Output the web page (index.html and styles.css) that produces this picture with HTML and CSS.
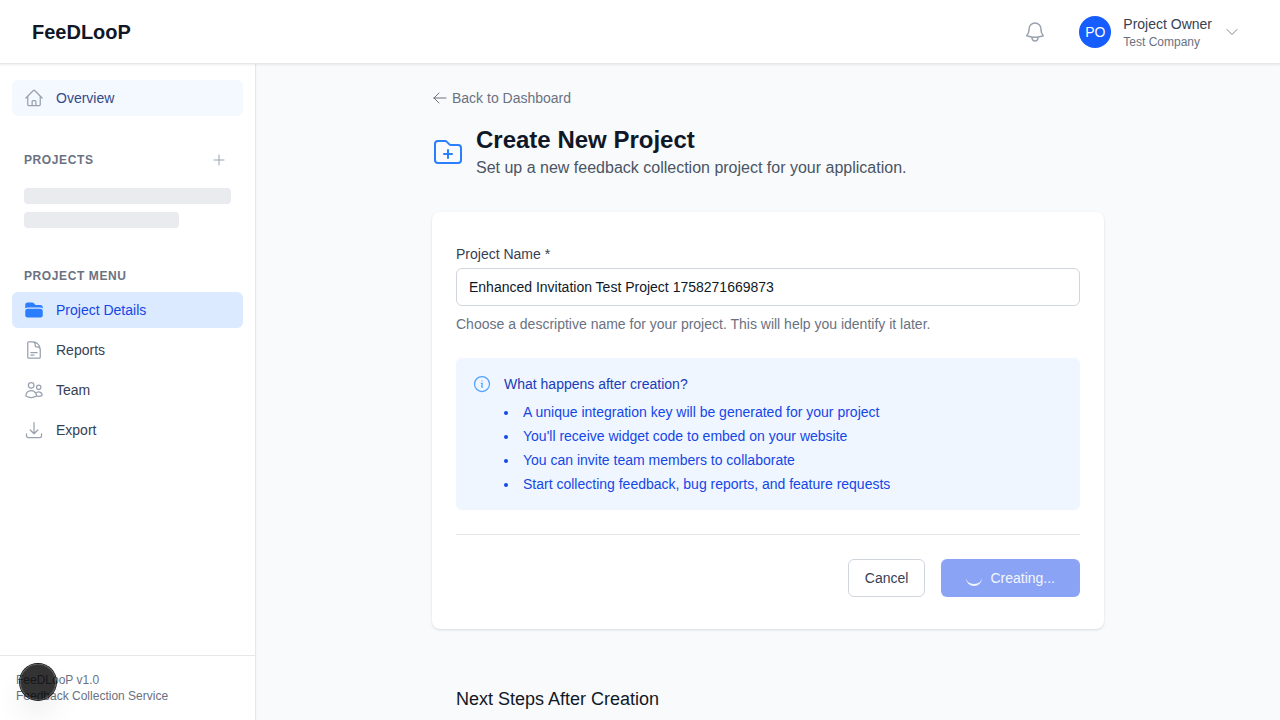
FILE: index.html
```html
<!DOCTYPE html>
<html lang="en">
<head>
<meta charset="utf-8">
<title>FeeDLooP</title>
<link rel="stylesheet" href="styles.css">
</head>
<body>
<header class="header">
  <div class="brand">FeeDLooP</div>
  <div class="header-right">
    <svg class="icon bell" viewBox="0 0 24 24"><path d="M14.857 17.082a23.848 23.848 0 0 0 5.454-1.31A8.967 8.967 0 0 1 18 9.75V9A6 6 0 0 0 6 9v.75a8.967 8.967 0 0 1-2.312 6.022c1.733.64 3.56 1.085 5.455 1.31m5.714 0a24.255 24.255 0 0 1-5.714 0m5.714 0a3 3 0 1 1-5.714 0"/></svg>
    <div class="user">
      <div class="avatar">PO</div>
      <div class="user-text"><div class="user-name">Project Owner</div><div class="user-company">Test Company</div></div>
      <svg class="icon chevron" viewBox="0 0 24 24"><path d="m19.5 8.25-7.5 7.5-7.5-7.5"/></svg>
    </div>
  </div>
</header>
<div class="body">
  <aside class="sidebar">
    <nav class="nav">
      <a class="nav-item overview"><svg class="icon" viewBox="0 0 24 24"><path d="m2.25 12 8.954-8.955c.44-.439 1.152-.439 1.591 0L21.75 12M4.5 9.75v10.125c0 .621.504 1.125 1.125 1.125H9.75v-4.875c0-.621.504-1.125 1.125-1.125h2.25c.621 0 1.125.504 1.125 1.125V21h4.125c.621 0 1.125-.504 1.125-1.125V9.75M8.25 21h8.25"/></svg>Overview</a>
      <div class="section-head projects-head"><span>PROJECTS</span><svg class="icon plus" viewBox="0 0 24 24"><path d="M12 4.5v15m7.5-7.5h-15"/></svg></div>
      <div class="skeletons"><div class="skeleton"></div><div class="skeleton short"></div></div>
      <div class="section-head menu-head"><span>PROJECT MENU</span></div>
      <div class="menu">
        <a class="nav-item active"><svg class="icon-solid" viewBox="0 0 24 24"><path d="M19.5 21a3 3 0 0 0 3-3v-4.5a3 3 0 0 0-3-3h-15a3 3 0 0 0-3 3V18a3 3 0 0 0 3 3h15ZM1.5 10.146V6a3 3 0 0 1 3-3h5.379a2.25 2.25 0 0 1 1.59.659l2.122 2.121c.14.141.331.22.53.22H19.5a3 3 0 0 1 3 3v1.146A4.483 4.483 0 0 0 19.5 9h-15a4.483 4.483 0 0 0-3 1.146Z"/></svg>Project Details</a>
        <a class="nav-item"><svg class="icon" viewBox="0 0 24 24"><path d="M19.5 14.25v-2.625a3.375 3.375 0 0 0-3.375-3.375h-1.5A1.125 1.125 0 0 1 13.5 7.125v-1.5a3.375 3.375 0 0 0-3.375-3.375H8.25m0 12.75h7.5m-7.5 3H12M10.5 2.25H5.625c-.621 0-1.125.504-1.125 1.125v17.25c0 .621.504 1.125 1.125 1.125h12.75c.621 0 1.125-.504 1.125-1.125V11.25a9 9 0 0 0-9-9Z"/></svg>Reports</a>
        <a class="nav-item"><svg class="icon" viewBox="0 0 24 24"><path d="M15 19.128a9.38 9.38 0 0 0 2.625.372 9.337 9.337 0 0 0 4.121-.952 4.125 4.125 0 0 0-7.533-2.493M15 19.128v-.003c0-1.113-.285-2.16-.786-3.07M15 19.128v.106A12.318 12.318 0 0 1 8.624 21c-2.331 0-4.512-.645-6.374-1.766l-.001-.109a6.375 6.375 0 0 1 11.964-3.07M12 6.375a3.375 3.375 0 1 1-6.75 0 3.375 3.375 0 0 1 6.75 0Zm8.25 2.25a2.625 2.625 0 1 1-5.25 0 2.625 2.625 0 0 1 5.25 0Z"/></svg>Team</a>
        <a class="nav-item"><svg class="icon" viewBox="0 0 24 24"><path d="M3 16.5v2.25A2.25 2.25 0 0 0 5.25 21h13.5A2.25 2.25 0 0 0 21 18.75V16.5M16.5 12 12 16.5m0 0L7.5 12m4.5 4.5V3"/></svg>Export</a>
      </div>
    </nav>
    <footer class="side-footer"><div>FeeDLooP v1.0</div><div>Feedback Collection Service</div></footer>
  </aside>
  <main class="main">
    <div class="content">
      <a class="back"><svg class="icon" viewBox="0 0 24 24"><path d="M10.5 19.5 3 12m0 0 7.5-7.5M3 12h18"/></svg>Back to Dashboard</a>
      <div class="title-row">
        <svg class="icon folder-plus" viewBox="0 0 24 24"><path d="M12 10.5v6m3-3H9m4.06-7.19-2.12-2.12a1.5 1.5 0 0 0-1.061-.44H4.5A2.25 2.25 0 0 0 2.25 6v12a2.25 2.25 0 0 0 2.25 2.25h15A2.25 2.25 0 0 0 21.75 18V9a2.25 2.25 0 0 0-2.25-2.25h-5.379a1.5 1.5 0 0 1-1.06-.44Z"/></svg>
        <div><h1>Create New Project</h1><p>Set up a new feedback collection project for your application.</p></div>
      </div>
      <section class="card">
        <label class="label" for="name">Project Name *</label>
        <input class="input" id="name" type="text" value="Enhanced Invitation Test Project 1758271669873">
        <p class="hint">Choose a descriptive name for your project. This will help you identify it later.</p>
        <div class="info">
          <svg class="icon" viewBox="0 0 24 24"><path d="m11.25 11.25.041-.02a.75.75 0 0 1 1.063.852l-.708 2.836a.75.75 0 0 0 1.063.853l.041-.021M21 12a9 9 0 1 1-18 0 9 9 0 0 1 18 0Zm-9-3.75h.008v.008H12V8.25Z"/></svg>
          <div>
            <h3>What happens after creation?</h3>
            <ul>
              <li>A unique integration key will be generated for your project</li>
              <li>You'll receive widget code to embed on your website</li>
              <li>You can invite team members to collaborate</li>
              <li>Start collecting feedback, bug reports, and feature requests</li>
            </ul>
          </div>
        </div>
        <div class="actions">
          <button class="btn cancel">Cancel</button>
          <button class="btn create"><span class="spinner"></span>Creating...</button>
        </div>
      </section>
      <h2 class="next">Next Steps After Creation</h2>
    </div>
  </main>
</div>
<div class="dev-badge"></div>
</body>
</html>
```
FILE: styles.css
```css
* { box-sizing: border-box; margin: 0; padding: 0; }
body {
  height: 720px;
  overflow: hidden;
  display: flex;
  flex-direction: column;
  background: #f9fafb;
  font-family: "Liberation Sans", Arial, sans-serif;
  font-size: 14px;
  line-height: 20px;
  color: #101828;
}
svg { display: block; flex-shrink: 0; }
.icon { width: 20px; height: 20px; fill: none; stroke: #99a1af; stroke-width: 1.5; stroke-linecap: round; stroke-linejoin: round; }
.icon-solid { width: 20px; height: 20px; fill: #2b7fff; }

.header {
  height: 64px;
  flex-shrink: 0;
  position: relative;
  z-index: 2;
  display: flex;
  align-items: center;
  justify-content: space-between;
  padding: 0 40px 0 32px;
  background: #fff;
  border-bottom: 1px solid #e5e7eb;
  box-shadow: 0 1px 2px rgba(0,0,0,.08);
}
.brand { font-size: 20px; line-height: 28px; font-weight: 700; }
.header-right { display: flex; align-items: center; gap: 32px; }
.icon.bell { width: 24px; height: 24px; }
.user { display: flex; align-items: center; }
.avatar { width: 32px; height: 32px; border-radius: 50%; background: #155dfc; color: #fff; display: flex; align-items: center; justify-content: center; }
.user-text { margin: 0 12px; }
.user-name { color: #364153; line-height: 20px; }
.user-company { color: #6a7282; font-size: 12px; line-height: 16px; }
.icon.chevron { width: 16px; height: 16px; stroke: #7d8594; }

.body { display: flex; flex: 1; min-height: 0; }
.sidebar { width: 256px; flex-shrink: 0; display: flex; flex-direction: column; background: #fff; border-right: 1px solid #e5e7eb; box-shadow: 0 1px 2px rgba(0,0,0,.06); }
.nav { flex: 1; padding: 16px 12px; }
.nav-item { height: 36px; display: flex; align-items: center; gap: 12px; padding: 0 12px; border-radius: 6px; color: #364153; }
.nav-item.overview { background: #f4f8ff; color: #34498a; }
.nav-item.active { background: #dbeafe; color: #1447e6; }
.section-head { display: flex; align-items: center; justify-content: space-between; padding: 0 12px; font-size: 12px; line-height: 16px; font-weight: 700; letter-spacing: .6px; color: #6a7282; }
.projects-head { height: 24px; margin-top: 32px; padding-right: 16px; }
.icon.plus { width: 16px; height: 16px; }
.skeletons { display: flex; flex-direction: column; gap: 8px; padding: 16px 12px 0; }
.skeleton { height: 16px; border-radius: 4px; background: #eaebef; }
.skeleton.short { width: 75%; }
.menu-head { margin-top: 40px; }
.menu { display: flex; flex-direction: column; gap: 4px; margin-top: 8px; }
.side-footer { height: 65px; padding: 16px; border-top: 1px solid #e5e7eb; font-size: 12px; line-height: 16px; color: #6a7282; }

.main { flex: 1; min-width: 0; }
.content { width: 672px; margin: 0 auto; padding-top: 24px; }
.back { display: flex; align-items: center; gap: 4px; color: #6a7282; }
.back .icon { width: 16px; height: 16px; stroke: #6a7282; }
.title-row { display: flex; align-items: center; gap: 12px; margin-top: 16px; }
.icon.folder-plus { width: 32px; height: 32px; stroke: #2b7fff; }
h1 { font-size: 24px; line-height: 32px; font-weight: 700; }
.title-row p { font-size: 16px; line-height: 24px; color: #4a5565; }
.card { margin-top: 32px; padding: 32px 24px; background: #fff; border-radius: 8px; box-shadow: 0 1px 3px rgba(0,0,0,.1), 0 1px 2px -1px rgba(0,0,0,.1); }
.label { display: block; color: #364153; }
.input { display: block; width: 100%; height: 38px; margin-top: 4px; padding: 8px 12px; border: 1px solid #d1d5dc; border-radius: 6px; background: #fff; font: inherit; color: #101828; }
.hint { margin-top: 8px; color: #6a7282; }
.info { display: flex; gap: 12px; margin-top: 24px; padding: 16px; border-radius: 6px; background: #eff6ff; }
.info .icon { stroke: #51a2ff; }
h3 { font-size: 14px; line-height: 20px; font-weight: 400; color: #193cb8; }
.info ul { margin-top: 8px; list-style: disc inside; display: flex; flex-direction: column; gap: 4px; color: #1447e6; }
.actions { display: flex; justify-content: flex-end; gap: 16px; margin-top: 24px; padding-top: 24px; border-top: 1px solid #e5e7eb; }
.btn { height: 38px; display: flex; align-items: center; border-radius: 6px; font: inherit; }
.cancel { padding: 0 16px; border: 1px solid #d1d5dc; background: #fff; color: #364153; }
.create { gap: 8px; padding: 0 24px; border: 1px solid transparent; background: #8aa3f4; background-clip: border-box; color: #f4f6fe; }
.spinner { width: 16px; height: 16px; border-radius: 50%; border-bottom: 2px solid #f4f6fe; }
.next { margin: 56px 24px 0; font-size: 18px; line-height: 28px; font-weight: 400; }
.dev-badge { position: absolute; z-index: 5; left: 20px; top: 664px; width: 36px; height: 36px; border-radius: 50%; background: rgba(0,0,0,.8); box-shadow: 0 0 0 1px #171717, inset 0 0 0 1px rgba(255,255,255,.14), 0 16px 32px -8px rgba(0,0,0,.24); }
```
